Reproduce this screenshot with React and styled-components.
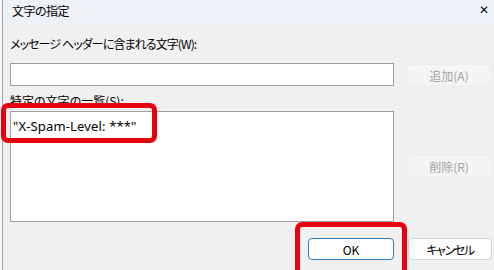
import React from "react";
import styled, { createGlobalStyle } from "styled-components";

const GlobalStyle = createGlobalStyle`
  html, body {
    margin: 0;
    padding: 0;
    background: #f6f6f6;
  }
  body {
    font-family: "Noto Sans CJK JP", "Liberation Sans", sans-serif;
    font-size: 12px;
    font-feature-settings: "palt" 1;
    color: #000;
  }
`;

const Page = styled.div`
  position: relative;
  width: 494px;
  height: 270px;
  padding-left: 2px;
  box-sizing: border-box;
  overflow: hidden;
`;

const Window = styled.div`
  height: 100%;
  display: flex;
  flex-direction: column;
  background: #f0f0f0;
  border-left: 1px solid #a8a8a8;
`;

const TitleBar = styled.div`
  height: 24px;
  flex: none;
  display: flex;
  align-items: center;
  padding: 0 2px 0 9px;
  background: #eef2f7;
  color: #000;
`;

const Title = styled.span`
  flex: 1;
  font-size: 12px;
  line-height: 16px;
  letter-spacing: -0.5px;
  margin-top: -2px;
`;

const CloseButton = styled.span`
  flex: none;
  width: 13px;
  height: 16px;
  margin-top: -4px;
  font-family: "DejaVu Sans", sans-serif;
  font-size: 12px;
  line-height: 16px;
  color: #111;
`;

const Body = styled.div`
  flex: 1;
  display: flex;
  flex-direction: column;
  padding: 12px 2px 0 7px;
`;

const Label = styled.div`
  font-size: 12px;
  line-height: 16px;
  letter-spacing: ${(p) => p.$tight || 0}px;
  margin-bottom: ${(p) => p.$gap}px;
  margin-top: ${(p) => p.$top || 0}px;
`;

const Row = styled.div`
  display: flex;
  align-items: flex-start;
  gap: 13px;
`;

const Input = styled.div`
  width: 384px;
  height: 23px;
  box-sizing: border-box;
  background: #fff;
  border: 1px solid #a0a0a0;
`;

const List = styled.div`
  width: 384px;
  height: 111px;
  box-sizing: border-box;
  background: #fff;
  border: 1px solid #a0a0a0;
  padding: 5px 2px;
`;

const Item = styled.div`
  font-family: "Noto Sans", "Liberation Sans", sans-serif;
  font-size: 13px;
  line-height: 18px;
  letter-spacing: 0.15px;
`;

const SideColumn = styled.div`
  display: flex;
  flex-direction: column;
  padding-top: ${(p) => p.$top}px;
`;

const Button = styled.div`
  width: ${(p) => p.$w || 84}px;
  height: 22px;
  box-sizing: border-box;
  display: flex;
  align-items: center;
  justify-content: center;
  font-size: 12px;
  letter-spacing: ${(p) => p.$tight || 0}px;
  border-radius: 4px;
  background: ${(p) => (p.$disabled ? "#f5f5f5" : "#fdfdfd")};
  color: ${(p) => (p.$disabled ? "#a2a2a2" : "#000")};
  border: 1px solid
    ${(p) => (p.$primary ? "#2f7fbf" : p.$disabled ? "#ededed" : "#d3d3d3")};
`;

const Footer = styled.div`
  display: flex;
  justify-content: flex-end;
  gap: 14px;
  margin-top: 16px;
`;

const Highlight = styled.div`
  position: absolute;
  left: ${(p) => p.$x}px;
  top: ${(p) => p.$y}px;
  width: ${(p) => p.$w}px;
  height: ${(p) => p.$h}px;
  box-sizing: border-box;
  border: 5px solid #e8000e;
  border-radius: 7px;
  pointer-events: none;
`;

export default function App() {
  return (
    <>
      <GlobalStyle />
      <Page>
        <Window>
          <TitleBar>
            <Title>文字の指定</Title>
            <CloseButton>✕</CloseButton>
          </TitleBar>
          <Body>
            <Label $gap={11} $tight={-0.9}>
              メッセージ ヘッダーに含まれる文字(W):
            </Label>
            <Row>
              <Input />
              <SideColumn $top={1}>
                <Button $disabled>追加(A)</Button>
              </SideColumn>
            </Row>
            <Label $top={7} $gap={2}>
              特定の文字の一覧(S):
            </Label>
            <Row>
              <List>
                <Item>"X-Spam-Level: ***"</Item>
              </List>
              <SideColumn $top={44}>
                <Button $disabled>削除(R)</Button>
              </SideColumn>
            </Row>
            <Footer>
              <Button $primary $w={86}>OK</Button>
              <Button $tight={-1.4}>キャンセル</Button>
            </Footer>
          </Body>
        </Window>
        <Highlight $x={1} $y={103} $w={156} $h={40} />
        <Highlight $x={295} $y={222} $w={112} $h={56} />
      </Page>
    </>
  );
}
